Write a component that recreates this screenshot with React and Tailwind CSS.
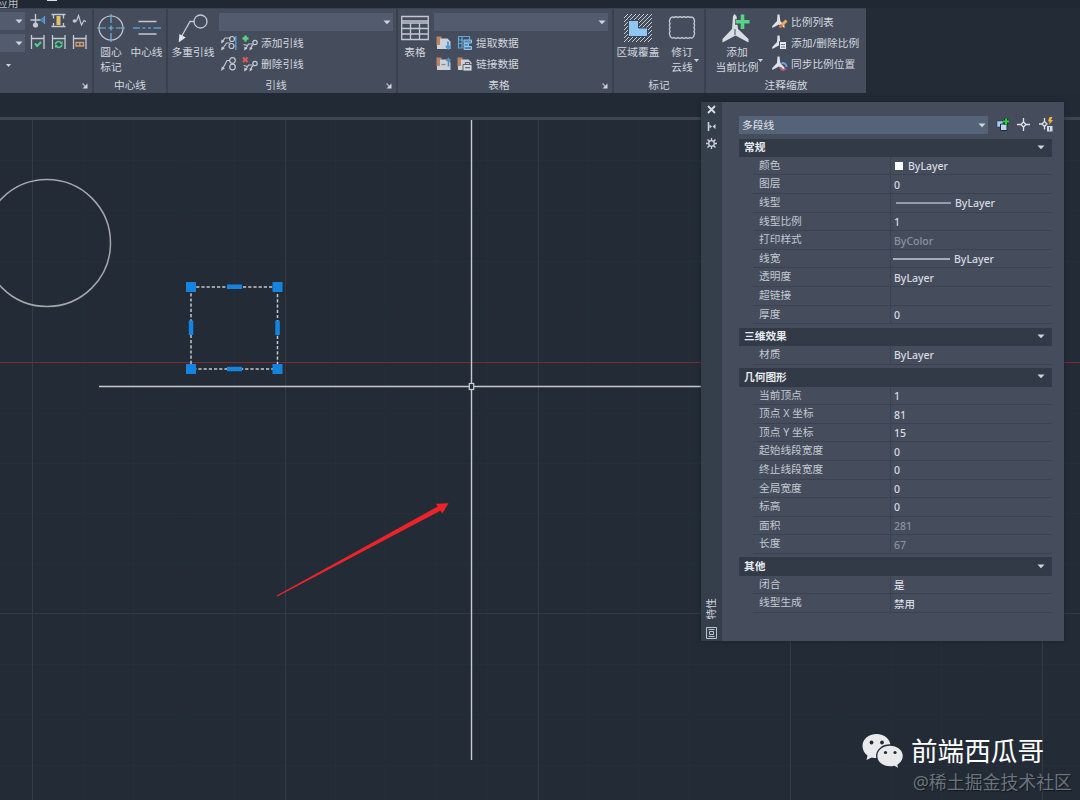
import React from 'react';

const SECTIONS = [
    {
        title: '常规',
        rows: [
            { label: '颜色', value: 'ByLayer', swatch: true },
            { label: '图层', value: '0' },
            { label: '线型', value: 'ByLayer', line: 'thin' },
            { label: '线型比例', value: '1' },
            { label: '打印样式', value: 'ByColor', muted: true },
            { label: '线宽', value: 'ByLayer', line: 'wide' },
            { label: '透明度', value: 'ByLayer' },
            { label: '超链接', value: '' },
            { label: '厚度', value: '0' },
        ],
    },
    {
        title: '三维效果',
        rows: [{ label: '材质', value: 'ByLayer' }],
    },
    {
        title: '几何图形',
        rows: [
            { label: '当前顶点', value: '1' },
            { label: '顶点 X 坐标', value: '81' },
            { label: '顶点 Y 坐标', value: '15' },
            { label: '起始线段宽度', value: '0' },
            { label: '终止线段宽度', value: '0' },
            { label: '全局宽度', value: '0' },
            { label: '标高', value: '0' },
            { label: '面积', value: '281', muted: true },
            { label: '长度', value: '67', muted: true },
        ],
    },
    {
        title: '其他',
        rows: [
            { label: '闭合', value: '是' },
            { label: '线型生成', value: '禁用' },
        ],
    },
];

const STROKE = '#c3c9d2';

function Caret({ className = '' }) {
    return (
        <svg width="8" height="5" viewBox="0 0 8 5" className={`shrink-0 ${className}`}>
            <path d="M0.5 0.5h7L4 4.3z" fill="#cfd4dc" />
        </svg>
    );
}

function Icon({ size = 16, children }) {
    return (
        <svg width={size} height={size} viewBox={`0 0 ${size} ${size}`} fill="none" stroke={STROKE} strokeWidth="1.2" className="shrink-0">
            {children}
        </svg>
    );
}

/* Dimension tools */
const DimAdjustIcon = () => (
    <Icon>
        <path d="M0.5 7h10M5.500 1v11" strokeWidth="1.400" />
        <path d="M10 7l4-2.500v5z" stroke="#5aa0d8" fill="#3f78ac" strokeWidth="0.8" />
        <path d="M14.500 3v8" stroke="#5aa0d8" />
        <circle cx="5.500" cy="12" r="2.600" fill={STROKE} stroke="none" />
    </Icon>
);
const DimSpaceIcon = () => (
    <Icon>
        <path d="M0.5 1.5h14M0.5 13.5h14M2.500 2v3.500M12.500 2v3.500M2.500 13v-3M12.500 13v-3" strokeWidth="1.300" />
        <path d="M5.5 3h4v9h-4z" fill="#e2c063" stroke="none" />
    </Icon>
);
const DimJogIcon = () => (
    <Icon>
        <path d="M1 8h3.500l2-5.500 3 9.500 2.500-4.500 2 1" />
        <circle cx="2.500" cy="8" r="1.800" fill={STROKE} stroke="none" />
    </Icon>
);
const DimBracket = ({ children }) => (
    <Icon>
        <path d="M1.500 0v14M14 0v14M1.500 3.500h12.500" strokeWidth="1.300" />
        {children}
    </Icon>
);
const DimCheckIcon = () => (
    <DimBracket>
        <path d="M5 8.500l2.200 2.500L11 7" stroke="#4fcf8a" strokeWidth="2" />
    </DimBracket>
);
const DimUpdateIcon = () => (
    <DimBracket>
        <path d="M4.500 9.500c0-3 4-4 6-1.500M11 9.500c0 3-4.500 4-6 1.500" stroke="#4fcf8a" strokeWidth="1.500" />
        <path d="M11.600 6v3H8.800zM4 13v-3h3z" fill="#4fcf8a" stroke="none" />
    </DimBracket>
);
const DimInspectIcon = () => (
    <DimBracket>
        <path d="M4 7.500h7.500v3.500H4zM7.800 7.500V11" stroke="#d59a6a" strokeWidth="1.400" />
    </DimBracket>
);

/* Large ribbon icons */
const CenterMarkIcon = () => (
    <Icon size={28}>
        <circle cx="14" cy="14" r="12" />
        <path d="M14 0v9M14 19v9M0 14h9M19 14h9M14 11.500v5M11.500 14h5" stroke="#6fb4e6" />
    </Icon>
);
const CenterLineIcon = () => (
    <Icon size={28}>
        <path d="M5.500 7.500h18M5.500 20h18" strokeWidth="1.400" />
        <path d="M0 14h7M9.500 14h3M15 14h3M20.500 14H28" stroke="#4f9bd6" strokeWidth="1.400" />
    </Icon>
);
const MultiLeaderIcon = () => (
    <svg width="30" height="28" viewBox="0 0 30 28" fill="none" stroke={STROKE} strokeWidth="1.300">
        <circle cx="22.500" cy="7.500" r="6.500" />
        <path d="M16 7.500h-4L3.500 22.500" />
        <path d="M1.500 27l.500-6 4.500 2.500z" fill="#e3e6eb" stroke="#e3e6eb" />
    </svg>
);
const TableIcon = () => (
    <Icon size={28}>
        <path d="M.7 2.500h26.600v23H.7zM.7 7h26.600M.7 9h26.600M.7 14.500h26.600M.7 20h26.600M9.500 9v16.500M18.500 9v16.500" strokeWidth="1.300" />
    </Icon>
);
const WipeoutIcon = () => (
    <Icon size={28}>
        <defs>
            <pattern id="hatch" width="4" height="4" patternUnits="userSpaceOnUse">
                <path d="M-1 1l2-2M0 4l4-4M3 5l2-2" stroke={STROKE} strokeWidth="1" />
            </pattern>
        </defs>
        <rect width="28" height="28" fill="url(#hatch)" stroke="none" />
        <path d="M4.500 6.500h10v7.500h9v8.500h-19z" fill="#8fc7f2" stroke="#3d4656" strokeWidth="1" />
    </Icon>
);
const RevCloudIcon = () => (
    <Icon size={30}>
        <path
            d="M3 5.500a2.600 2.600 0 0 1 4-2a3 2.400 0 0 1 4 0a3 2.400 0 0 1 4 0a3 2.400 0 0 1 4 0a3 2.400 0 0 1 4 0a2.600 2.600 0 0 1 4 2a2.400 3 0 0 1 0 4a2.400 3 0 0 1 0 4a2.400 3 0 0 1 0 4a2.400 3 0 0 1 0 4a2.600 2.600 0 0 1-4 2a3 2.400 0 0 1-4 0a3 2.400 0 0 1-4 0a3 2.400 0 0 1-4 0a3 2.400 0 0 1-4 0a2.600 2.600 0 0 1-4-2a2.400 3 0 0 1 0-4a2.400 3 0 0 1 0-4a2.400 3 0 0 1 0-4a2.400 3 0 0 1 0-4z"
            strokeWidth="1.400"
        />
    </Icon>
);
const AddScaleIcon = () => (
    <Icon size={30}>
        <path d="M12.500 0l2 2.200 1.500 12.800 10.500 10v3.500l-13-7-13 7v-3.500l9.500-10 1-12.800z" fill="#d9dde3" stroke="none" />
        <path d="M13 15v6" stroke="#5d6676" />
        <path d="M20.500 .500v15M13 8h15" stroke="#454d5d" strokeWidth="5.500" />
        <path d="M20.500 .500v14.500M13.500 7.800h14" stroke="#58d284" strokeWidth="3.600" />
    </Icon>
);

/* Small ribbon icons */
const AlignLeaderIcon = () => (
    <Icon>
        <path d="M1 7l3-4h6M1.500 14l4-6h4" />
        <path d="M0 8.500l.500-4 3 2zM0 15.500l.800-4 3 2z" fill={STROKE} stroke="none" />
        <circle cx="11" cy="4" r="2.500" />
        <circle cx="10.500" cy="11" r="2.500" />
        <path d="M14.800 1v14" stroke="#4f9bd6" strokeWidth="1.500" />
    </Icon>
);
const CollectLeaderIcon = () => (
    <Icon>
        <path d="M1.500 13L6 4.500h3" />
        <path d="M0 15l.800-4.500 3 2z" fill={STROKE} stroke="none" />
        <circle cx="11.500" cy="4.500" r="2.800" />
        <circle cx="11.500" cy="11" r="2.800" />
    </Icon>
);
const LeaderEdit = ({ children }) => (
    <Icon>
        <path d="M3.500 14l3-5h3.500M9 14c0-2.500 1-4 3-5M1.500 9.500l4 1" />
        <circle cx="13" cy="7.500" r="2.200" />
        <path d="M2 15.500l.500-4 3 2zM7.500 15.500l.300-3.500 3 1.500z" fill={STROKE} stroke="none" />
        {children}
    </Icon>
);
const AddLeaderIcon = () => (
    <LeaderEdit>
        <path d="M3.500 0.500v6M.500 3.500h6" stroke="#58d284" strokeWidth="2.400" />
    </LeaderEdit>
);
const RemoveLeaderIcon = () => (
    <LeaderEdit>
        <path d="M1 1.500l4.500 4.500M5.500 1.500L1 6" stroke="#e2565b" strokeWidth="2.200" />
    </LeaderEdit>
);
const SheetIcon = ({ children }) => (
    <Icon>
        <path d="M0.500 1.500h5v9h-5z" fill="#b98468" stroke="none" />
        <path d="M4 3.500h7.500l3 3V14H1v-4h3z" fill="#cdd1d8" stroke="none" />
        {children}
    </Icon>
);
const DownloadSourceIcon = () => (
    <SheetIcon>
        <path d="M12 6.500v7M10 11l2.200 2.500 2.300-2.500" stroke="#4f9bd6" strokeWidth="2" />
    </SheetIcon>
);
const UploadSourceIcon = () => (
    <SheetIcon>
        <path d="M12.500 10.500V2.500M10.500 5l2-2.500L14.500 5" stroke="#4f8fc4" strokeWidth="1.600" />
        <path d="M5.500 8.500h4" stroke="#7d8796" />
    </SheetIcon>
);
const ExtractIcon = () => (
    <Icon>
        <path d="M1.500 1.500h11v3M1.500 1.500v11.500h4M1.500 5h5M1.500 8.500h4M5 1.500v11" stroke="#5aa9dd" />
        <path d="M7 5h7.500v3H7zM7 8.500h4.500v2.500H7zM7 11.500h7.500v3H7z" fill="#4d88b8" stroke="#8ec4ea" strokeWidth="1" />
    </Icon>
);
const LinkDataIcon = () => (
    <SheetIcon>
        <path d="M6 8.500h9v6.500H6z" fill="#d6dae0" stroke="#4a5262" strokeWidth="0.900" />
        <path d="M8.500 8V6.500h4V8" stroke="#5b6475" />
        <path d="M8 11.700h5" stroke="#586173" />
    </SheetIcon>
);
const ScaleBase = ({ children }) => (
    <Icon>
        <path d="M5.500 0.500h2l.800 6.500 4.200 4.500v2.500L6.800 10.500.300 14v-2L5 7z" fill="#dfe2e7" stroke="none" />
        {children}
    </Icon>
);
const ScaleListIcon = () => (
    <ScaleBase>
        <path d="M9 12l5.500-5.500" stroke="#e9b25a" strokeWidth="3" />
        <path d="M7.500 13.500L10 11" stroke="#d4685c" strokeWidth="3" />
    </ScaleBase>
);
const ScaleEditIcon = () => (
    <ScaleBase>
        <path d="M7.500 6.500h7v8h-7z" fill="#e6e9ee" stroke="#454d5d" strokeWidth="1" />
        <path d="M9 9.500h4M9 12h4" stroke="#697386" />
    </ScaleBase>
);
const ScaleSyncIcon = () => (
    <ScaleBase>
        <path d="M9 7.500c3-1.500 5.500 .500 5.500 3.500" stroke="#6b9be0" strokeWidth="2" />
        <path d="M14 12.500c-2 2.500-5.500 1.500-5.500-1.500" stroke="#c2557e" strokeWidth="2" />
    </ScaleBase>
);

function RibbonPanel({ title, launcher, className, children }) {
    return (
        <section className={`flex h-full shrink-0 flex-col bg-[#454d5d] ${className}`}>
            <div className="flex h-[69px] items-start">{children}</div>
            <div className={`relative flex h-4 items-center justify-center ${launcher ? 'pr-3' : ''}`}>
                <span>{title}</span>
                {launcher && (
                    <svg width="6" height="6" viewBox="0 0 6 6" className="absolute right-1 top-1.5">
                        <path d="M0.500 0.500l4 4" stroke="#aab1bd" strokeWidth="1.200" fill="none" />
                        <path d="M5.500 0.500v5h-5z" fill="#cfd4dc" />
                    </svg>
                )}
            </div>
        </section>
    );
}

function BigButton({ icon, lines, arrow, className = '' }) {
    return (
        <div className={`relative flex shrink-0 flex-col items-center ${className}`}>
            <div className="flex h-9 items-start justify-center pt-[5px]">{icon}</div>
            {lines.map((line) => (
                <span key={line} className="h-[15px] leading-[15px]">
                    {line}
                </span>
            ))}
            {arrow && (
                <svg width="5" height="3" viewBox="0 0 5 3" className="absolute -right-1 top-[50px]">
                    <path d="M0 0h5L2.500 3z" fill="#cfd4dc" />
                </svg>
            )}
        </div>
    );
}

function Combo({ className = '' }) {
    return (
        <div className={`flex items-center justify-end bg-[#525c6e] pr-[2px] ${className}`}>
            <Caret />
        </div>
    );
}

function ToolRow({ icons, label }) {
    return (
        <div className="flex h-[21px] items-center">
            <div className="flex gap-[5px]">{icons}</div>
            <span className="ml-[3px]">{label}</span>
        </div>
    );
}

function Ribbon() {
    return (
        <div className="flex h-[85px] w-[866px] gap-0.5 border-t border-[#3a4351] bg-[#39414f]">
            <RibbonPanel title="" launcher className="w-[92px]">
                <div className="flex w-[25px] flex-col pt-[3px]">
                    <Combo className="h-[18px]" />
                    <Combo className="mt-1 h-[18px]" />
                    <svg width="5" height="3" viewBox="0 0 5 3" className="ml-1.5 mt-3">
                        <path d="M0 0h5L2.500 3z" fill="#cfd4dc" />
                    </svg>
                </div>
                <div className="ml-[5px] grid grid-cols-3 gap-x-[5px] gap-y-[6px] pt-1">
                    <DimAdjustIcon />
                    <DimSpaceIcon />
                    <DimJogIcon />
                    <DimCheckIcon />
                    <DimUpdateIcon />
                    <DimInspectIcon />
                </div>
            </RibbonPanel>

            <RibbonPanel title="中心线" className="w-[72px]">
                <BigButton icon={<CenterMarkIcon />} lines={['圆心', '标记']} className="ml-0.5 w-[30px]" />
                <BigButton icon={<CenterLineIcon />} lines={['中心线']} className="ml-1 w-[33px]" />
            </RibbonPanel>

            <RibbonPanel title="引线" launcher className="w-[228px]">
                <BigButton icon={<MultiLeaderIcon />} lines={['多重引线']} className="ml-[3px] w-11" />
                <div className="ml-1 flex flex-col pt-1">
                    <Combo className="h-[18px] w-[174px]" />
                    <div className="ml-0.5 pt-px">
                        <ToolRow icons={<><AlignLeaderIcon /><AddLeaderIcon /></>} label="添加引线" />
                        <ToolRow icons={<><CollectLeaderIcon /><RemoveLeaderIcon /></>} label="删除引线" />
                    </div>
                </div>
            </RibbonPanel>

            <RibbonPanel title="表格" launcher className="w-[214px]">
                <BigButton icon={<TableIcon />} lines={['表格']} className="ml-[3px] w-7" />
                <div className="ml-[5px] flex flex-col pt-1">
                    <Combo className="h-[18px] w-[174px]" />
                    <div className="ml-0.5 pt-px">
                        <ToolRow icons={<><DownloadSourceIcon /><ExtractIcon /></>} label="提取数据" />
                        <ToolRow icons={<><UploadSourceIcon /><LinkDataIcon /></>} label="链接数据" />
                    </div>
                </div>
            </RibbonPanel>

            <RibbonPanel title="标记" className="w-[90px]">
                <BigButton icon={<WipeoutIcon />} lines={['区域覆盖']} className="ml-0.5 w-11" />
                <BigButton icon={<RevCloudIcon />} lines={['修订', '云线']} arrow className="ml-[9px] w-[26px]" />
            </RibbonPanel>

            <RibbonPanel title="注释缩放" className="w-[160px]">
                <BigButton icon={<AddScaleIcon />} lines={['添加', '当前比例']} arrow className="ml-[9px] w-11" />
                <div className="ml-[13px] flex flex-col pt-0.5">
                    <ToolRow icons={<ScaleListIcon />} label="比例列表" />
                    <ToolRow icons={<ScaleEditIcon />} label="添加/删除比例" />
                    <ToolRow icons={<ScaleSyncIcon />} label="同步比例位置" />
                </div>
            </RibbonPanel>
        </div>
    );
}

const MINOR_X = [83, 133.5, 184, 234.5, 335.5, 386, 436.5, 487, 588, 638.5, 689, 840, 891, 941.5, 992];
const MINOR_Y = [160.5, 211, 261.5, 312, 413, 463.5, 513.5, 564, 664.5, 715, 765.5];
const MAJOR_X = [32.5, 285.5, 538.5, 790.5, 1042.5];
const CORNER_GRIPS = [[191, 287], [277.5, 287], [191, 369], [277.5, 369]];

// Model space, drawn in window coordinates starting below the ribbon
function DrawingCanvas() {
    return (
        <svg width="1080" height="680" viewBox="0 120 1080 680" className="block">
            <g stroke="#252f39">
                {MINOR_X.map((x) => <path key={x} d={`M${x} 120V800`} />)}
                {MINOR_Y.map((y) => <path key={y} d={`M0 ${y}H1080`} />)}
            </g>
            <g stroke="#323b46">
                {MAJOR_X.map((x) => <path key={x} d={`M${x} 120V800`} />)}
                <path d="M0 613.500H1080" />
            </g>
            <path d="M0 362.500H1080" stroke="#7d2a33" />

            <circle cx="47" cy="243" r="63.500" fill="none" stroke="#a3a8ae" strokeWidth="1.500" />

            <rect x="191" y="287" width="86.500" height="82" fill="none" stroke="#c4c7cb" strokeWidth="1.500" strokeDasharray="3.200 2" />
            <g fill="#1583e0">
                {CORNER_GRIPS.map(([x, y]) => (
                    <rect key={`${x}-${y}`} x={x - 5} y={y - 5} width="10" height="10" />
                ))}
                <rect x="227" y="284.500" width="15" height="4.500" />
                <rect x="227" y="366.800" width="15" height="4.500" />
                <rect x="188.800" y="320.500" width="4.500" height="14.500" />
                <rect x="275.300" y="320.500" width="4.500" height="14.500" />
            </g>

            <path d="M471.500 120V383M471.500 390V760M99 386.500H469M474 386.500H701" stroke="#c6c9ce" strokeWidth="1.400" />
            <rect x="469.300" y="383.500" width="4.400" height="6" fill="none" stroke="#cdd0d4" strokeWidth="1.200" />

            <path d="M276.700 595.400L437.700 506.500 436 503.800 448.500 503.300 442.300 513.500 440.400 510.800 277.300 596.400z" fill="#ee2329" />
        </svg>
    );
}

function PropertyRow({ label, value, swatch, line, muted }) {
    return (
        <div className="ml-3.5 flex h-[18.600px] border-b border-[#3b4352]">
            <div className="w-[138px] border-r border-[#3b4352] pl-1.5 leading-[16px] text-[#c3c8d0]">{label}</div>
            <div className={`flex flex-1 items-center pl-[3px] pt-px text-[10.500px] font-medium ${muted ? 'text-[#8a92a0]' : 'text-[#d8dbe1]'}`}>
                {swatch && <span className="ml-px mr-[5px] size-2 bg-white" />}
                {line === 'thin' && <span className="ml-0.5 mr-1 h-[2px] w-[55px] bg-[#969daa]" />}
                {line === 'wide' && <span className="-ml-px mr-1 h-[2px] w-[57px] bg-[#a7adb8]" />}
                {value}
            </div>
        </div>
    );
}

function PropertiesPalette() {
    return (
        <aside className="absolute left-[701px] top-[102px] flex h-[539px] w-[363px] bg-[#454d5d] shadow-[0_0_4px_rgba(20,26,34,0.6)]">
            <div className="flex w-[21px] flex-col items-center bg-[#353e4b]">
                <svg width="9" height="9" viewBox="0 0 9 9" className="mt-[3px]">
                    <path d="M1 1l7 7M8 1L1 8" stroke="#d9dde3" strokeWidth="1.800" />
                </svg>
                <svg width="9" height="9" viewBox="0 0 9 9" className="mt-[8px]">
                    <path d="M1.500 0v9" stroke="#cfd4dc" strokeWidth="1.500" />
                    <path d="M2.500 2.500L5 4.500 2.500 6.500zM8.500 2L5.500 4.500 8.500 7z" fill="#cfd4dc" />
                </svg>
                <svg width="11" height="11" viewBox="0 0 11 11" className="mt-[7px]" fill="none" stroke="#cfd4dc">
                    <circle cx="5.500" cy="5.500" r="2.800" strokeWidth="1.300" />
                    <path d="M5.500 0v2.500M5.500 8.500V11M0 5.500h2.500M8.500 5.500H11M1.500 1.500l2 2M7.500 7.500l2 2M9.500 1.500l-2 2M3.500 7.500l-2 2" strokeWidth="1.300" />
                </svg>
                <span className="mt-auto rotate-180 leading-[13px] text-[#cfd4dc] [text-orientation:sideways] [writing-mode:vertical-rl]">特性</span>
                <svg width="11" height="12" viewBox="0 0 11 12" className="mb-0.5 mt-2" fill="none" stroke="#bcc2cb">
                    <path d="M.500 .500h10v11H.500zM2.500 2.500h6M2.500 9.500h6M3.500 4.500h4v3h-4z" />
                </svg>
            </div>

            <div className="flex-1 pl-[17px] pr-3 pt-[13.500px]">
                <div className="flex items-center">
                    <div className="flex h-[18px] w-[249px] items-center justify-between bg-[#556378] pl-[3px] pr-0.5 text-[#e1e4e9]">
                        多段线
                        <Caret className="mt-0.5" />
                    </div>
                    <svg width="14" height="14" viewBox="0 0 14 14" className="ml-2">
                        <path d="M1 3h6v6H1z" fill="#a9cdf0" stroke="#232c36" strokeWidth="0.500" />
                        <path d="M4.500 6H11v6.500H4.500z" fill="#b9d5f2" stroke="#232c36" />
                        <path d="M10 .500v6M7 3.500h6" stroke="#0a3a16" strokeWidth="3.500" />
                        <path d="M10 .500v6M7 3.500h6" stroke="#25d045" strokeWidth="2" />
                    </svg>
                    <svg width="13" height="13" viewBox="0 0 13 13" className="ml-[7px]" fill="none" stroke="#dfe2e7">
                        <path d="M6.500 0v4M6.500 9v4M0 6.500h4M9 6.500h4" strokeWidth="1.300" />
                        <path d="M6.500 4L9 6.500 6.500 9 4 6.500z" strokeWidth="1.300" />
                    </svg>
                    <svg width="14" height="15" viewBox="0 0 14 15" className="-mr-3 ml-[9px]" fill="none" stroke="#dfe2e7">
                        <path d="M5.500 1v4M5.500 9.500v3M0 7h3.500M5.500 4.500L8 7 5.500 9.500 3 7z" strokeWidth="1.300" />
                        <path d="M8 9h5.500v5.500H8z" fill="#d7dae0" stroke="none" />
                        <path d="M10.500 10v3.500" stroke="#5d6676" />
                        <path d="M10.500 0h3l-1.500 3h2L10 8l.800-3.500H9z" fill="#f2b83c" stroke="none" />
                    </svg>
                </div>

                <div className="mt-[5px] flex flex-col gap-[3.500px]">
                    {SECTIONS.map((section) => (
                        <div key={section.title}>
                            <div className="flex h-[18.400px] items-center justify-between bg-[#323a47] pb-px pl-[5px] pr-[7px] font-bold text-[#e6e9ed]">
                                {section.title}
                                <Caret />
                            </div>
                            {section.rows.map((row) => (
                                <PropertyRow key={row.label} {...row} />
                            ))}
                        </div>
                    ))}
                </div>
            </div>
        </aside>
    );
}

function Watermark() {
    return (
        <div className="absolute right-2 top-[730px] flex flex-col items-end">
            <div className="mr-7 flex h-[42px] items-center gap-[7px]">
                <svg width="42" height="36" viewBox="0 0 42 36">
                    <path d="M14.500 1C6.500 1 .500 6 .500 13c0 4 2 7.300 5 9.500l-1 4.500 5.200-2.600c1.500.400 3.200.600 4.800.600 8 0 14-5.300 14-12S22.500 1 14.500 1z" fill="#e8eaec" />
                    <path d="M28 12c-7.500 0-13.300 4.800-13.300 11S20.500 34 28 34c1.500 0 3-.200 4.300-.600L37 36l-1-4c3.300-2 5.400-5.300 5.400-9C41.400 16.800 35.500 12 28 12z" fill="#e8eaec" stroke="#232c36" strokeWidth="1.300" />
                    <g fill="#232c36">
                        <circle cx="9.500" cy="9.500" r="1.900" />
                        <circle cx="20" cy="9.500" r="1.900" />
                        <circle cx="23.500" cy="19.500" r="1.600" />
                        <circle cx="33" cy="19.500" r="1.600" />
                    </g>
                </svg>
                <span className="text-[26.600px] leading-none text-white">前端西瓜哥</span>
            </div>
            <span className="text-[17.900px] leading-5 text-[#6c737c] [text-shadow:1px_1px_1px_#11171e]">@稀土掘金技术社区</span>
        </div>
    );
}

export default function App() {
    return (
        <div className="relative flex h-[800px] w-[1080px] flex-col overflow-hidden bg-[#232c36] font-['Noto_Sans','Noto_Sans_CJK_SC',sans-serif] text-[10.700px] leading-4 text-[#d3d7de]">
            <div className="flex h-2 items-end overflow-hidden bg-[#202933]">
                <span className="-ml-[3px] mb-[-3px] text-[#b9bec6]">应用</span>
                <span className="mb-[7px] ml-[29px] h-1 w-2.5 bg-[#d9dde3]" />
            </div>
            <Ribbon />
            <div className="h-6 shrink-0 bg-[#222b35]" />
            <div className="h-[3px] shrink-0 bg-[#3c4550]" />
            <DrawingCanvas />
            <PropertiesPalette />
            <Watermark />
        </div>
    );
}
